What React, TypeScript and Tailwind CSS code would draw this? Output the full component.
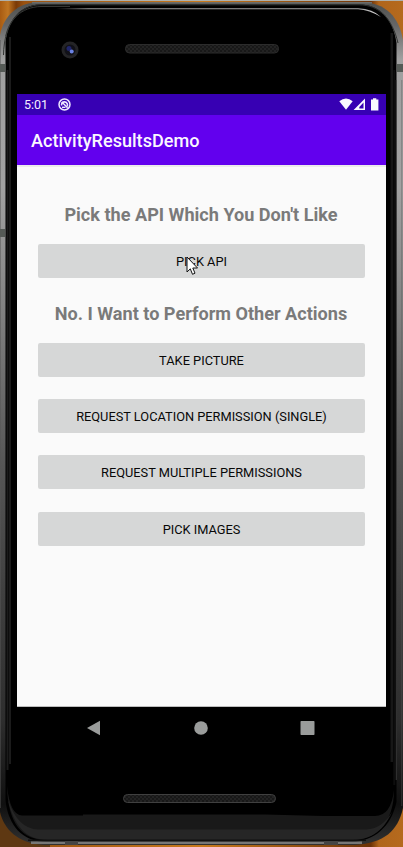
import React from "react";

function DeviceBody() {
  return (
    <svg className="absolute inset-0" width="403" height="847" viewBox="0 0 403 847" aria-hidden="true">
      <defs>
        <linearGradient id="wood" x1="0" y1="0" x2="1" y2="0">
          <stop offset="0" stopColor="#a85b12" />
          <stop offset="0.02" stopColor="#c07622" />
          <stop offset="0.04" stopColor="#7a3a08" />
          <stop offset="0.06" stopColor="#9a5210" />
          <stop offset="0.5" stopColor="#c97a1c" />
          <stop offset="0.92" stopColor="#6d3206" />
          <stop offset="0.94" stopColor="#b0651b" />
          <stop offset="1" stopColor="#b56a1e" />
        </linearGradient>
        <linearGradient id="metal" gradientUnits="userSpaceOnUse" x1="0" y1="0" x2="0" y2="847">
          <stop offset="0" stopColor="#4c4e4c" />
          <stop offset="0.03" stopColor="#666" />
          <stop offset="0.07" stopColor="#a0a0a0" />
          <stop offset="0.22" stopColor="#a2a2a2" />
          <stop offset="0.32" stopColor="#8c8c8c" />
          <stop offset="0.42" stopColor="#747474" />
          <stop offset="0.55" stopColor="#565656" />
          <stop offset="0.7" stopColor="#404040" />
          <stop offset="0.85" stopColor="#2e2e2e" />
          <stop offset="0.95" stopColor="#101010" />
          <stop offset="1" stopColor="#333" />
        </linearGradient>
        <linearGradient id="shine" x1="0" y1="0" x2="1" y2="0">
          <stop offset="0" stopColor="#888" stopOpacity="0" />
          <stop offset="0.1" stopColor="#999" />
          <stop offset="0.95" stopColor="#aaa" />
          <stop offset="1" stopColor="#ddd" />
        </linearGradient>
        <pattern id="mesh" width="4" height="4" patternUnits="userSpaceOnUse">
          <rect width="4" height="4" fill="#181818" />
          <path d="M0 1h2M2 3h2" stroke="#2e2e2e" />
        </pattern>
      </defs>
      <rect width="403" height="847" fill="url(#wood)" />
      <path d="M0 800H50V847H0Z" fill="#5e3812" />
      <rect width="403" height="1" fill="#aeb0ac" />
      <path d="M0 812V35C4 15 18 3 38 2H362C386 3 399 17 403 40V808C398 831 384 843 355 845H44C17 843 4 829 0 812Z" fill="url(#metal)" />
      <path d="M5.5 800V42C8 20 20 5 40 4.5H360C381 5 393 20 396.5 43V802C391 827 374 841 352 842H47C22 842 8 825 5.5 800Z" fill="#000" />
      <path d="M3.5 55C4 24 19 5 41 4.8H359C379 5 392 18 398 43" fill="none" stroke="#303230" />
      <path d="M5.8 36C9 20 21 7 41 6.5H70" fill="none" stroke="#343634" />
      <path d="M0.5 808V40M401.8 806V80" stroke="#555" strokeOpacity="0.5" />
      <path d="M396.2 780V80" stroke="#3f3f3f" />
      <path d="M7.5 70V770M10 37V764" stroke="#1b1b1b" strokeWidth="2" />
      <path d="M391.8 33V762" stroke="#171717" strokeWidth="2.5" />
      <path d="M394.3 70V785" stroke="#0d0d0d" strokeWidth="2" />
      <path d="M7 786Q10 815 22 815.5H83V814.5H265L323 816H375Q391 816 394 790C394 825 374 840 352 840H47C22 840 8 824 7 786Z" fill="#191919" />
      <path d="M8 800Q18 829 38 829.5H366Q382 829 392 812C382 834 368 840 350 840H48C26 840 14 826 8 800Z" fill="#262626" />
      <path d="M28 840.3H366" stroke="#111" strokeWidth="1.5" />
      <path d="M31 842.8H362" stroke="#777" strokeWidth="2.4" />
      <path d="M65 843H78M324 843H338" stroke="#444" strokeWidth="4" />
      <path d="M56 8.3H358Q373 9 381 17Q369 10 358 9.3H56Z" fill="url(#shine)" />
      <path d="M32 2.7H372" stroke="#6b6d6b" strokeWidth="1.4" />
      <path d="M0 68H5M397 68H403M0 233H5" stroke="#555a56" strokeWidth="8" />
      <circle cx="70" cy="50" r="8.5" fill="#242426" />
      <circle cx="70" cy="50" r="5.5" fill="#111118" />
      <circle cx="69" cy="48.5" r="2.5" fill="#20266b" />
      <circle cx="71.7" cy="51.5" r="2" fill="#6b83e4" />
      <rect x="125.5" y="44.5" width="153" height="8.5" rx="4" fill="url(#mesh)" stroke="#2c2c2c" />
      <rect x="123.5" y="794.5" width="152" height="8" rx="4" fill="url(#mesh)" stroke="#404040" />
    </svg>
  );
}

function StatusBar() {
  return (
    <div className="flex h-[21px] items-center bg-[#3700b3] text-[#f5efff]">
      <span className="ml-[7px] w-[34px] text-[12.5px] leading-[21px]">5:01</span>
      <svg width="13" height="13" viewBox="0 0 13 13" fill="none" stroke="#eee7ff">
        <circle cx="6.5" cy="6.5" r="5.5" strokeWidth="1.5" />
        <path d="M3.6 7.5V6.2A3 3 0 0 1 9.4 6V8.4" strokeWidth="1.6" />
        <path d="M3.8 4L9.6 9.8" strokeWidth="1.5" />
        <path d="M4 9.3H7.5" strokeWidth="1.4" />
      </svg>
      <svg className="mr-[7px] ml-auto" width="40" height="13" viewBox="0 0 40 13" fill="#faf8ff">
        <path d="M0.3 3.2Q7 -2 13.7 3.2L7 11.8Z" />
        <path fillRule="evenodd" d="M14.6 12L26 0.6V12ZM20.3 10.6H24.5V4.5L20.3 8.9Z" />
        <path d="M34 0.3H37.3V1.5H39.4V12.5H32V1.5H34Z" />
      </svg>
    </div>
  );
}

function Action({ label, className = "" }: { label: string; className?: string }) {
  return (
    <button
      className={`flex h-[34px] w-full shrink-0 items-center justify-center rounded-[2px] bg-[#d6d7d7] pt-px pl-px text-[12.8px] font-normal leading-[14px] text-[#080808] ${className}`}
    >
      {label}
    </button>
  );
}

export default function App() {
  return (
    <div className="relative h-[847px] w-[403px] overflow-hidden font-['Roboto','Liberation_Sans',sans-serif]">
      <DeviceBody />
      <div className="relative pt-[94px] pr-[17px] pl-[17px]">
        <div className="flex h-[613px] flex-col bg-[#fafafa]">
          <StatusBar />
          <header className="flex h-[50px] shrink-0 items-center bg-[#6200ee] pt-[2px] pl-[14px] text-[18.1px] font-medium text-[#fbf7ff]">
            ActivityResultsDemo
          </header>
          <main className="flex flex-1 flex-col border-t-2 border-b border-t-[#ebebeb] border-b-[#bdbdbd] pr-[21.5px] pl-[20.5px]">
            <h2 className="mt-[36px] h-[24px] text-center text-[18.1px] font-bold leading-[24px] whitespace-nowrap text-[#7a7a7a]">
              Pick the API Which You Don't Like
            </h2>
            <Action label="PICK API" className="mt-[17px]" />
            <h2 className="mt-[24px] h-[24px] text-center text-[18.1px] font-bold leading-[24px] whitespace-nowrap text-[#7a7a7a]">
              No. I Want to Perform Other Actions
            </h2>
            <Action label="TAKE PICTURE" className="mt-[17px]" />
            <Action label="REQUEST LOCATION PERMISSION (SINGLE)" className="mt-[22px]" />
            <Action label="REQUEST MULTIPLE PERMISSIONS" className="mt-[22px]" />
            <Action label="PICK IMAGES" className="mt-[23px]" />
          </main>
        </div>
        <nav className="flex h-[42px] items-center pl-[69px]">
          <svg width="230" height="16" viewBox="0 0 230 16" fill="#9a9c9b">
            <path d="M1 8L14 0.8V15.2Z" />
            <circle cx="115" cy="8" r="6.8" />
            <rect x="214.5" y="1" width="14" height="14" rx="0.7" />
          </svg>
        </nav>
      </div>
      <svg className="absolute top-[256px] left-[186px]" width="14" height="20" viewBox="0 0 14 20">
        <path d="M1 1V16L4.3 12.8L6.5 18.3L9 17.2L6.8 12H11.5Z" fill="#fff" stroke="#111" />
      </svg>
    </div>
  );
}
